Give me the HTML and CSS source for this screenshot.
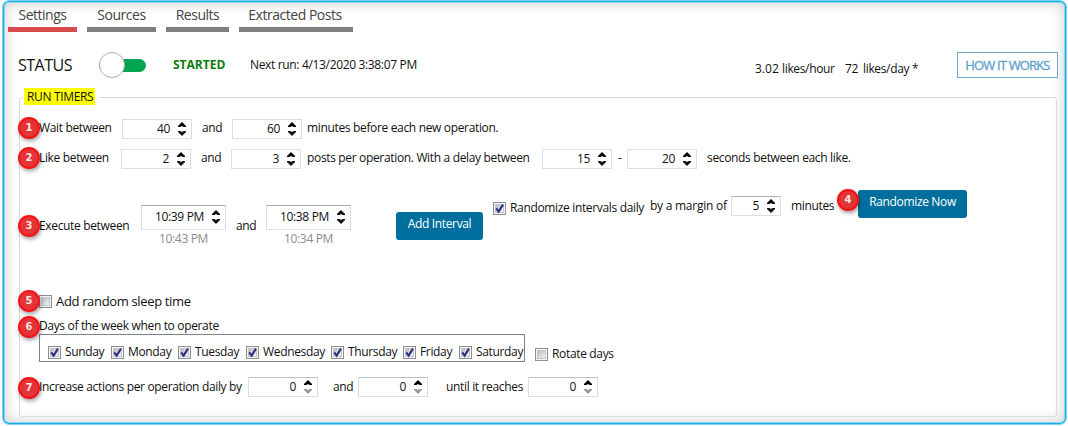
FILE: index.html
```
<!DOCTYPE html>
<html lang="en">
<head>
<meta charset="utf-8">
<title>Like settings</title>
<link rel="stylesheet" href="styles.css">
</head>
<body>
<svg class="defs" width="0" height="0">
  <defs>
    <linearGradient id="face" x1="0" y1="0" x2="1" y2="1"><stop offset="0" stop-color="#b4b8be"/><stop offset="1" stop-color="#f8f8f8"/></linearGradient>
    <symbol id="spin" viewBox="0 0 8 14"><path d="M4 0 8 4v1H5.6L4 4 2.400 5H0V4z"/><path class="down" d="M4 14 8 10V9H5.600L4 10 2.400 9H0v1z"/></symbol>
    <symbol id="box" viewBox="0 0 13 13"><rect x=".5" y=".5" width="12" height="12" fill="#f4f4f4" stroke="#8e8f8f"/><rect x="2.5" y="2.5" width="8" height="8" fill="url(#face)" stroke="#c3c7cd"/></symbol>
    <symbol id="checked" viewBox="0 0 13 13"><use href="#box"/><path d="M3.2 6.3 5.6 9.6 10 2.6" fill="none" stroke="#2b2f83" stroke-width="2"/></symbol>
  </defs>
</svg>
<div class="frame">
  <nav class="tabs">
    <a class="tab active t-settings"><span>Settings</span></a>
    <a class="tab t-sources"><span>Sources</span></a>
    <a class="tab t-results"><span>Results</span></a>
    <a class="tab t-posts"><span>Extracted Posts</span></a>
  </nav>
  <header class="status">
    <span class="status-name">STATUS</span>
    <span class="toggle"><i></i></span>
    <b class="started">STARTED</b>
    <span class="next">Next run: 4/13/2020 3:38:07 PM</span>
    <span class="rate r1">3.02</span><span class="rate r2">likes/hour</span><span class="rate r3">72</span><span class="rate r4">likes/day *</span>
    <button class="how">HOW IT WORKS</button>
  </header>
  <section class="timers">
    <h2 class="legend"><span>RUN TIMERS</span></h2>
    <div class="row wait">
      <b class="badge">1</b>
      <span class="label w-wait">Wait between</span>
      <span class="num">40<svg><use href="#spin"/></svg></span>
      <span class="label and">and</span>
      <span class="num">60<svg><use href="#spin"/></svg></span>
      <span class="label w-minutes">minutes before each new operation.</span>
    </div>
    <div class="row like">
      <b class="badge">2</b>
      <span class="label w-like">Like between</span>
      <span class="num">2<svg><use href="#spin"/></svg></span>
      <span class="label and">and</span>
      <span class="num">3<svg><use href="#spin"/></svg></span>
      <span class="label w-posts">posts per operation. With a delay between</span>
      <span class="num">15<svg><use href="#spin"/></svg></span>
      <span class="label dash">-</span>
      <span class="num">20<svg><use href="#spin"/></svg></span>
      <span class="label w-seconds">seconds between each like.</span>
    </div>
    <div class="row execute">
      <b class="badge">3</b>
      <span class="label w-exec">Execute between</span>
      <div class="time"><span class="num">10:39 PM<svg><use href="#spin"/></svg></span><small>10:43 PM</small></div>
      <span class="label exec-and">and</span>
      <div class="time"><span class="num">10:38 PM<svg><use href="#spin"/></svg></span><small>10:34 PM</small></div>
      <button class="btn add">Add Interval</button>
      <svg class="check c-rand"><use href="#checked"/></svg>
      <span class="label w-rand">Randomize intervals daily</span>
      <span class="label w-margin">by a margin of</span>
      <span class="num short">5<svg><use href="#spin"/></svg></span>
      <span class="label w-mins">minutes</span>
      <div class="now"><b class="badge">4</b><button class="btn">Randomize Now</button></div>
    </div>
    <div class="row sleep">
      <b class="badge">5</b>
      <svg class="check"><use href="#box"/></svg>
      <span class="label w-sleep">Add random sleep time</span>
    </div>
    <div class="row daytitle">
      <b class="badge">6</b>
      <span class="label w-days">Days of the week when to operate</span>
    </div>
    <div class="row days">
      <div class="daybox">
        <label class="d-sun"><svg class="check"><use href="#checked"/></svg>Sunday</label>
        <label class="d-mon"><svg class="check"><use href="#checked"/></svg>Monday</label>
        <label class="d-tue"><svg class="check"><use href="#checked"/></svg>Tuesday</label>
        <label class="d-wed"><svg class="check"><use href="#checked"/></svg>Wednesday</label>
        <label class="d-thu"><svg class="check"><use href="#checked"/></svg>Thursday</label>
        <label class="d-fri"><svg class="check"><use href="#checked"/></svg>Friday</label>
        <label class="d-sat"><svg class="check"><use href="#checked"/></svg>Saturday</label>
      </div>
      <label class="rotate"><svg class="check"><use href="#box"/></svg>Rotate days</label>
    </div>
    <div class="row increase">
      <b class="badge">7</b>
      <span class="label w-inc">Increase actions per operation daily by</span>
      <span class="num zero">0<svg><use href="#spin"/></svg></span>
      <span class="label inc-and">and</span>
      <span class="num zero">0<svg><use href="#spin"/></svg></span>
      <span class="label w-until">until it reaches</span>
      <span class="num zero">0<svg><use href="#spin"/></svg></span>
    </div>
  </section>
</div>
</body>
</html>
```
FILE: styles.css
```
* { box-sizing: border-box; }
body { margin: 0; width: 1068px; height: 426px; overflow: hidden; background: #fff; color: #111; font: 12px/16px "Open Sans", "Noto Sans", sans-serif; letter-spacing: -.34px; }
.defs { position: absolute; }
button { font: inherit; letter-spacing: inherit; margin: 0; }

.frame { margin: 0 1px 0 2px; height: 425px; border: 1px solid #7fd3f3; border-radius: 7px; padding: 3px 0 0 5px;
  box-shadow: inset 0 0 0 1px #14aee5, inset 0 0 0 2px #8ed8f3, inset 0 0 13px 3px rgba(0, 0, 0, .17); }

.tabs { display: flex; gap: 10px; }
.tab { height: 28px; border-bottom: 5px solid #808080; color: #444; font-size: 14px; line-height: 22px; letter-spacing: -.47px; text-align: center; white-space: nowrap; }
.tab.active { border-color: #d94a4f; }
.t-settings, .t-sources { width: 69px; }
.t-results { width: 63px; }
.t-posts { width: 114px; padding-right: 2px; }

.status { display: flex; height: 56px; padding: 20px 0 0 10px; white-space: nowrap; }
.status-name { width: 81px; font-size: 16px; line-height: 26px; letter-spacing: -.5px; }
.toggle { width: 47px; height: 13px; margin: 7px 26px 0 0; border-radius: 7px; background: #00a551; }
.toggle i { display: block; width: 26px; height: 26px; margin-top: -7px; border: 1px solid #b5acac; border-radius: 50%; background: #fff; }
.started { width: 78px; padding-left: 1px; line-height: 26px; letter-spacing: 0; color: #0b7d10; }
.next { width: 505px; line-height: 26px; }
.rate { line-height: 33px; }
.r1 { width: 27px; letter-spacing: 0; }
.r2 { width: 63px; }
.r3 { width: 18px; }
.r4 { width: 94px; }
.how { width: 101px; height: 26px; padding: 0; border: 1px solid #6fa8d0; background: #fff; color: #5e9fcd; font-size: 13px; letter-spacing: -.85px; -webkit-text-stroke: .3px; line-height: 22px; }

.timers { width: 1038px; height: 320px; margin: 9px 0 0 11px; border: 1px solid #d5dce2; border-radius: 3px; }
.legend { width: 76px; height: 18px; margin: -10px 0 0 3px; padding: 0 4px 0 1px; background: #fff; font-size: 12px; font-weight: 400; }
.legend span { display: block; height: 17px; padding-left: 3px; line-height: 17px; background: #ff0; white-space: nowrap; }
.row { display: flex; align-items: flex-start; margin-left: -2px; white-space: nowrap; }
.badge { position: relative; z-index: 1; flex: none; width: 22px; height: 22px; margin-right: -1px; border: 2px solid #f81217; border-radius: 50%; background: #e33538; color: #ffe4e4; font: bold 10px/18px "DejaVu Sans", sans-serif; letter-spacing: 0; text-align: center; box-shadow: 1px 2px 4px rgba(0, 0, 0, .4); }
.label { flex: none; line-height: 16px; }
.num { flex: none; display: flex; justify-content: flex-end; width: 70px; height: 20px; padding-right: 5px; border: 1px solid #d9dde5; background: #fff; line-height: 17px; }
.num svg { width: 8px; height: 14px; margin: 2px 0 0 8px; }
.zero svg { color: #999; }
.zero { border-top-color: #b9bec8; }
.check { flex: none; width: 13px; height: 13px; }

.wait { height: 30px; margin-top: 12px; }
.like { height: 37px; }
.wait .badge, .like .badge { margin-top: -1px; }
.wait .num, .like .num { margin-top: 1px; }
.wait .label, .like .label { margin-top: 2px; }
.w-wait { width: 83px; }
.w-like { width: 82px; }
.and { width: 40px; padding-left: 10px; }
.w-minutes { padding-left: 5px; }
.w-posts { width: 241px; padding-left: 6px; }
.dash { width: 15px; padding-left: 6px; }
.w-seconds { padding-left: 10px; }

.execute { height: 105px; }
.execute > .badge { margin-top: 30px; }
.w-exec { width: 102px; margin-top: 33px; }
.time { width: 85px; margin-top: 20px; }
.time .num { width: 85px; height: 25px; padding-right: 5px; border-top-color: #a9adb5; line-height: 22px; }
.time .num svg { margin-top: 4px; }
.time small { display: block; padding-left: 18px; color: #8b8b8b; font-size: 12px; line-height: 18px; }
.exec-and { width: 40px; padding-left: 10px; margin-top: 33px; }
.btn { height: 28px; padding: 0 0 4px; border: 0; border-radius: 3px; background: #006f9e; color: #fff; }
.add { width: 87px; margin: 27px 10px 0 45px; }
.c-rand { margin-top: 17px; }
.w-rand { width: 144px; margin-top: 15px; padding-left: 4px; }
.w-margin { width: 81px; margin-top: 13px; }
.w-rand + .w-margin { letter-spacing: -.25px; }
.short { width: 50px; margin-top: 11px; border-top-color: #a9adb5; }
.w-mins { width: 56px; padding-left: 10px; margin-top: 13px; }
.now { display: flex; margin-top: 5px; }
.now .badge { margin-top: -1px; }
.now .btn { width: 109px; }

.sleep { height: 26px; }
.sleep .check { margin-top: 5px; }
.w-sleep { margin: 3px 0 0 4px; font-size: 13px; }
.daytitle { height: 18px; }
.w-days { margin-top: 2px; }
.days { height: 43px; padding-left: 21px; }
.daybox { display: flex; width: 486px; height: 28px; padding: 9px 0 0 8px; border: 1px solid #7c828c; }
.daybox label, .rotate { display: flex; flex: none; line-height: 16px; gap: 4px; }
.daybox .check { margin-top: 2px; }
.d-sun { width: 63px; }
.d-mon { width: 67px; }
.d-tue { width: 68px; }
.d-wed { width: 85px; }
.d-thu { width: 72px; }
.d-fri { width: 56px; }
.rotate { margin: 12px 0 0 10px; }
.rotate .check { margin-top: 2px; }
.w-inc { width: 209px; margin-top: 2px; }
.inc-and { width: 40px; padding-left: 15px; margin-top: 2px; }
.w-until { width: 100px; padding-left: 18px; margin-top: 2px; }
.down { fill: currentColor; }
```
